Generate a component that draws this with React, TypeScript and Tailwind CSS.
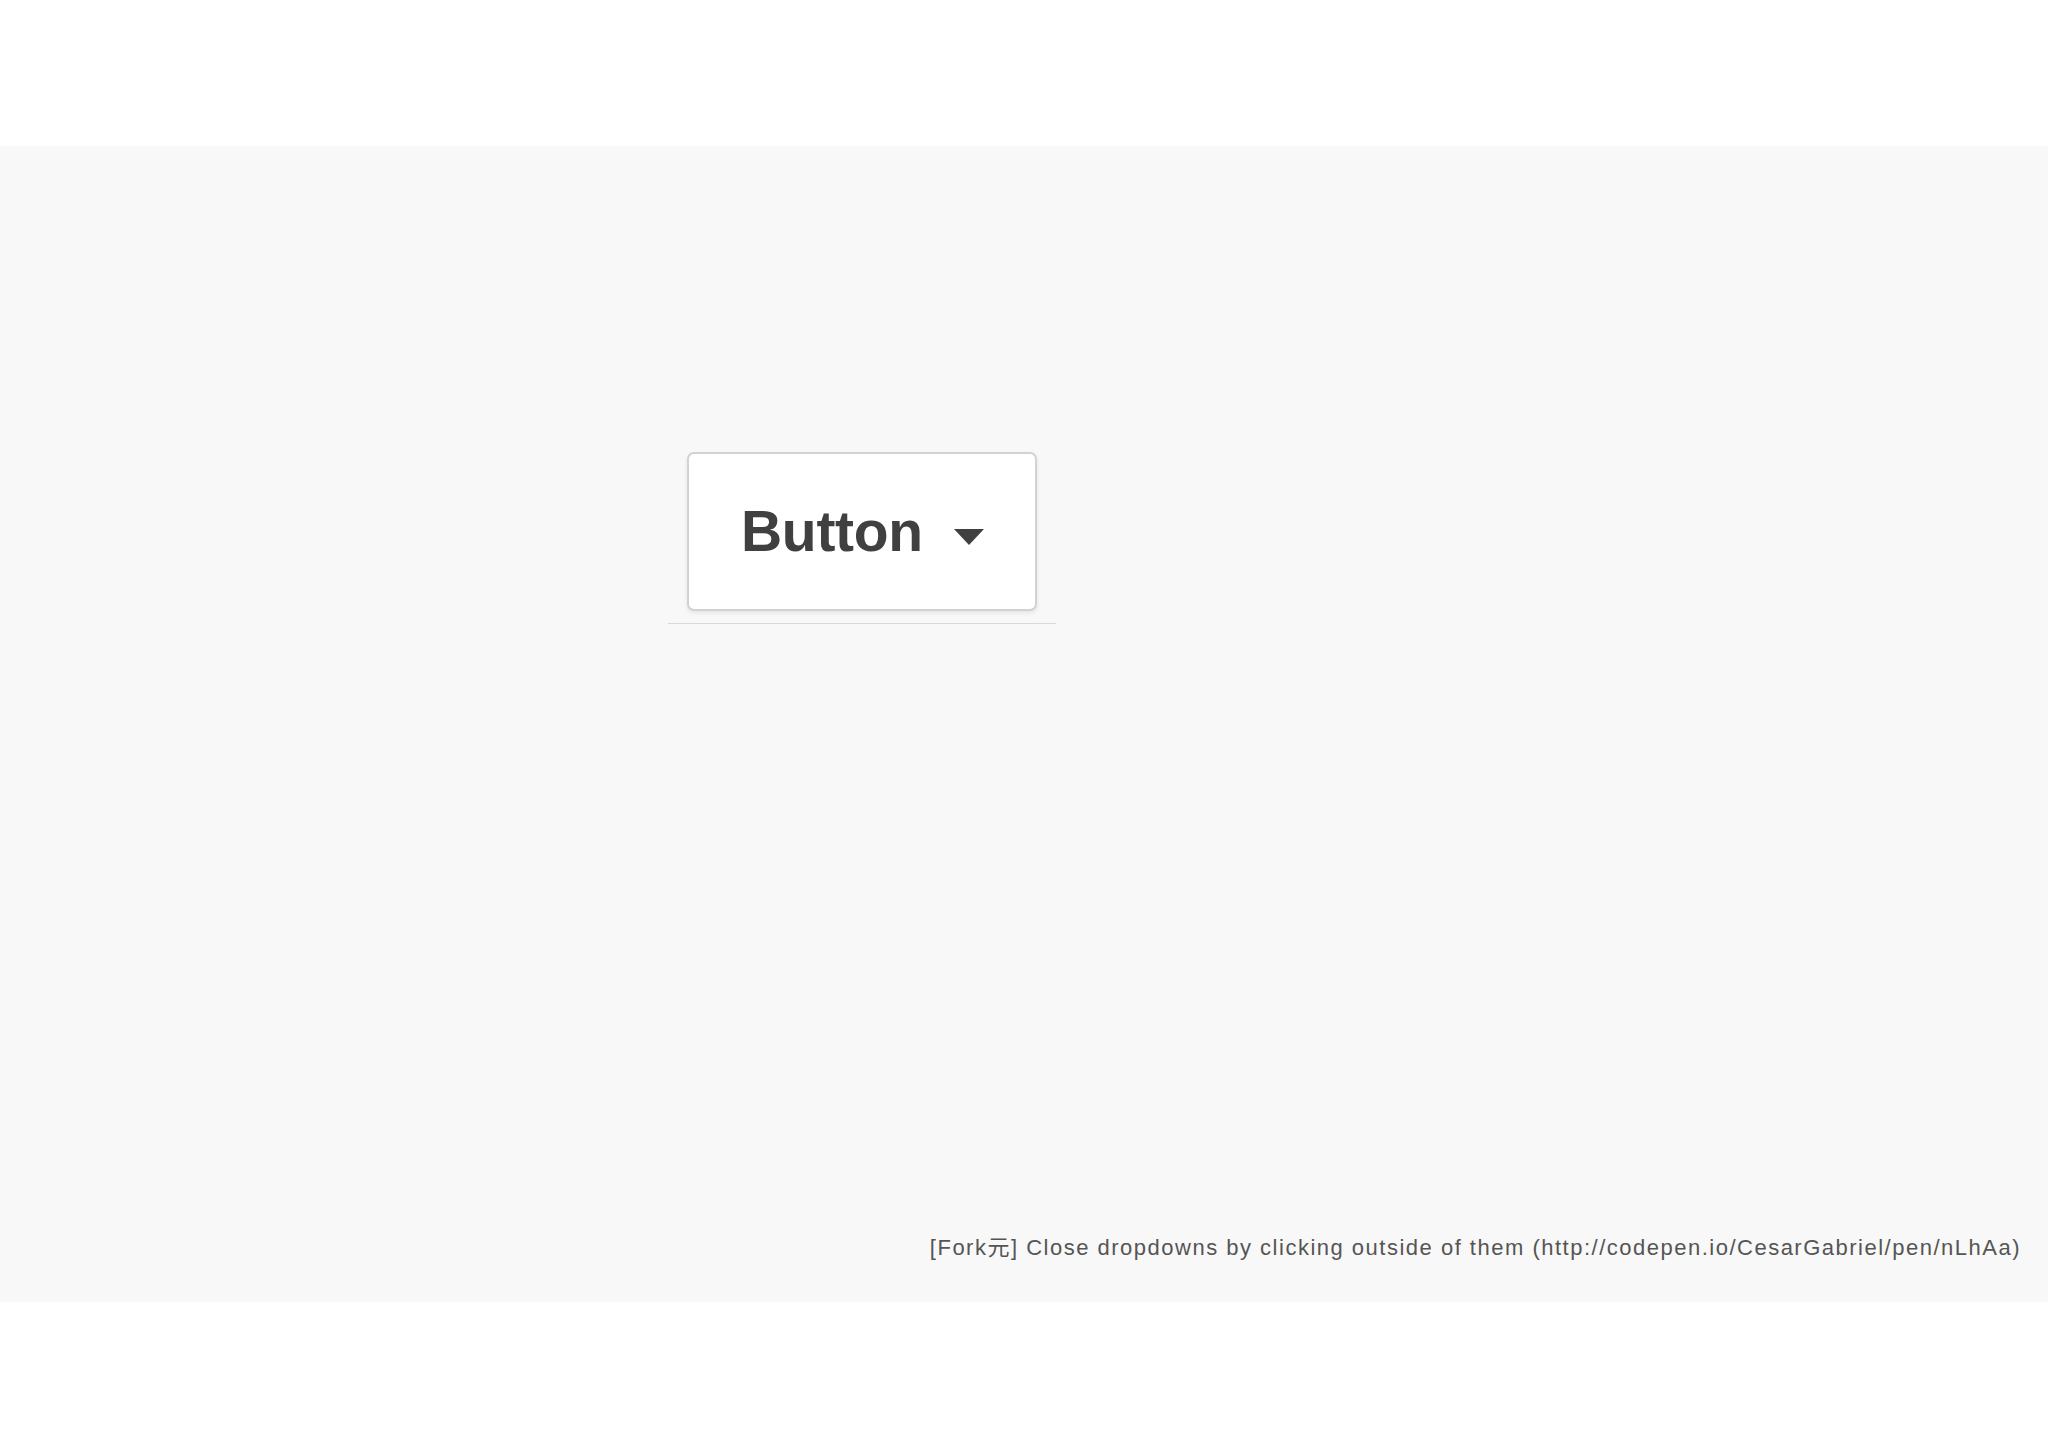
import React from "react";

export default function App() {
  return (
    <div className="w-[2048px] h-[1447px] bg-white flex flex-col" style={{ fontFamily: '"Liberation Sans", Arial, "Noto Sans CJK JP", sans-serif' }}>
      <div className="h-[146px] shrink-0 bg-white" />
      <div className="h-[1156px] shrink-0 bg-[#f8f8f8] flex flex-col">
        <div className="pt-[306px] pl-[668px]">
          <div className="w-[388px] border-b border-[#d9d9d9] pb-[12px] pl-[19px]">
            <button className="w-[350px] h-[159px] flex items-center pl-[52px] bg-white border-2 border-[#d2d2d2] rounded-[7px] shadow-[0_2px_4px_rgba(0,0,0,0.08)] text-[#404040]">
              <span className="text-[57px] font-bold leading-none tracking-[-0.3px]">Button</span>
              <span className="ml-[31px] mt-[11px] w-0 h-0 border-l-[15.5px] border-r-[15.5px] border-t-[16px] border-l-transparent border-r-transparent border-t-[#404040]" />
            </button>
          </div>
        </div>
        <div className="flex-1" />
        <div className="flex justify-end pr-[27px] mb-[41px] text-[22px] leading-[26px] tracking-[1.5px] text-[#555555]">
          [Fork元] Close dropdowns by clicking outside of them (http://codepen.io/CesarGabriel/pen/nLhAa)
        </div>
      </div>
    </div>
  );
}
